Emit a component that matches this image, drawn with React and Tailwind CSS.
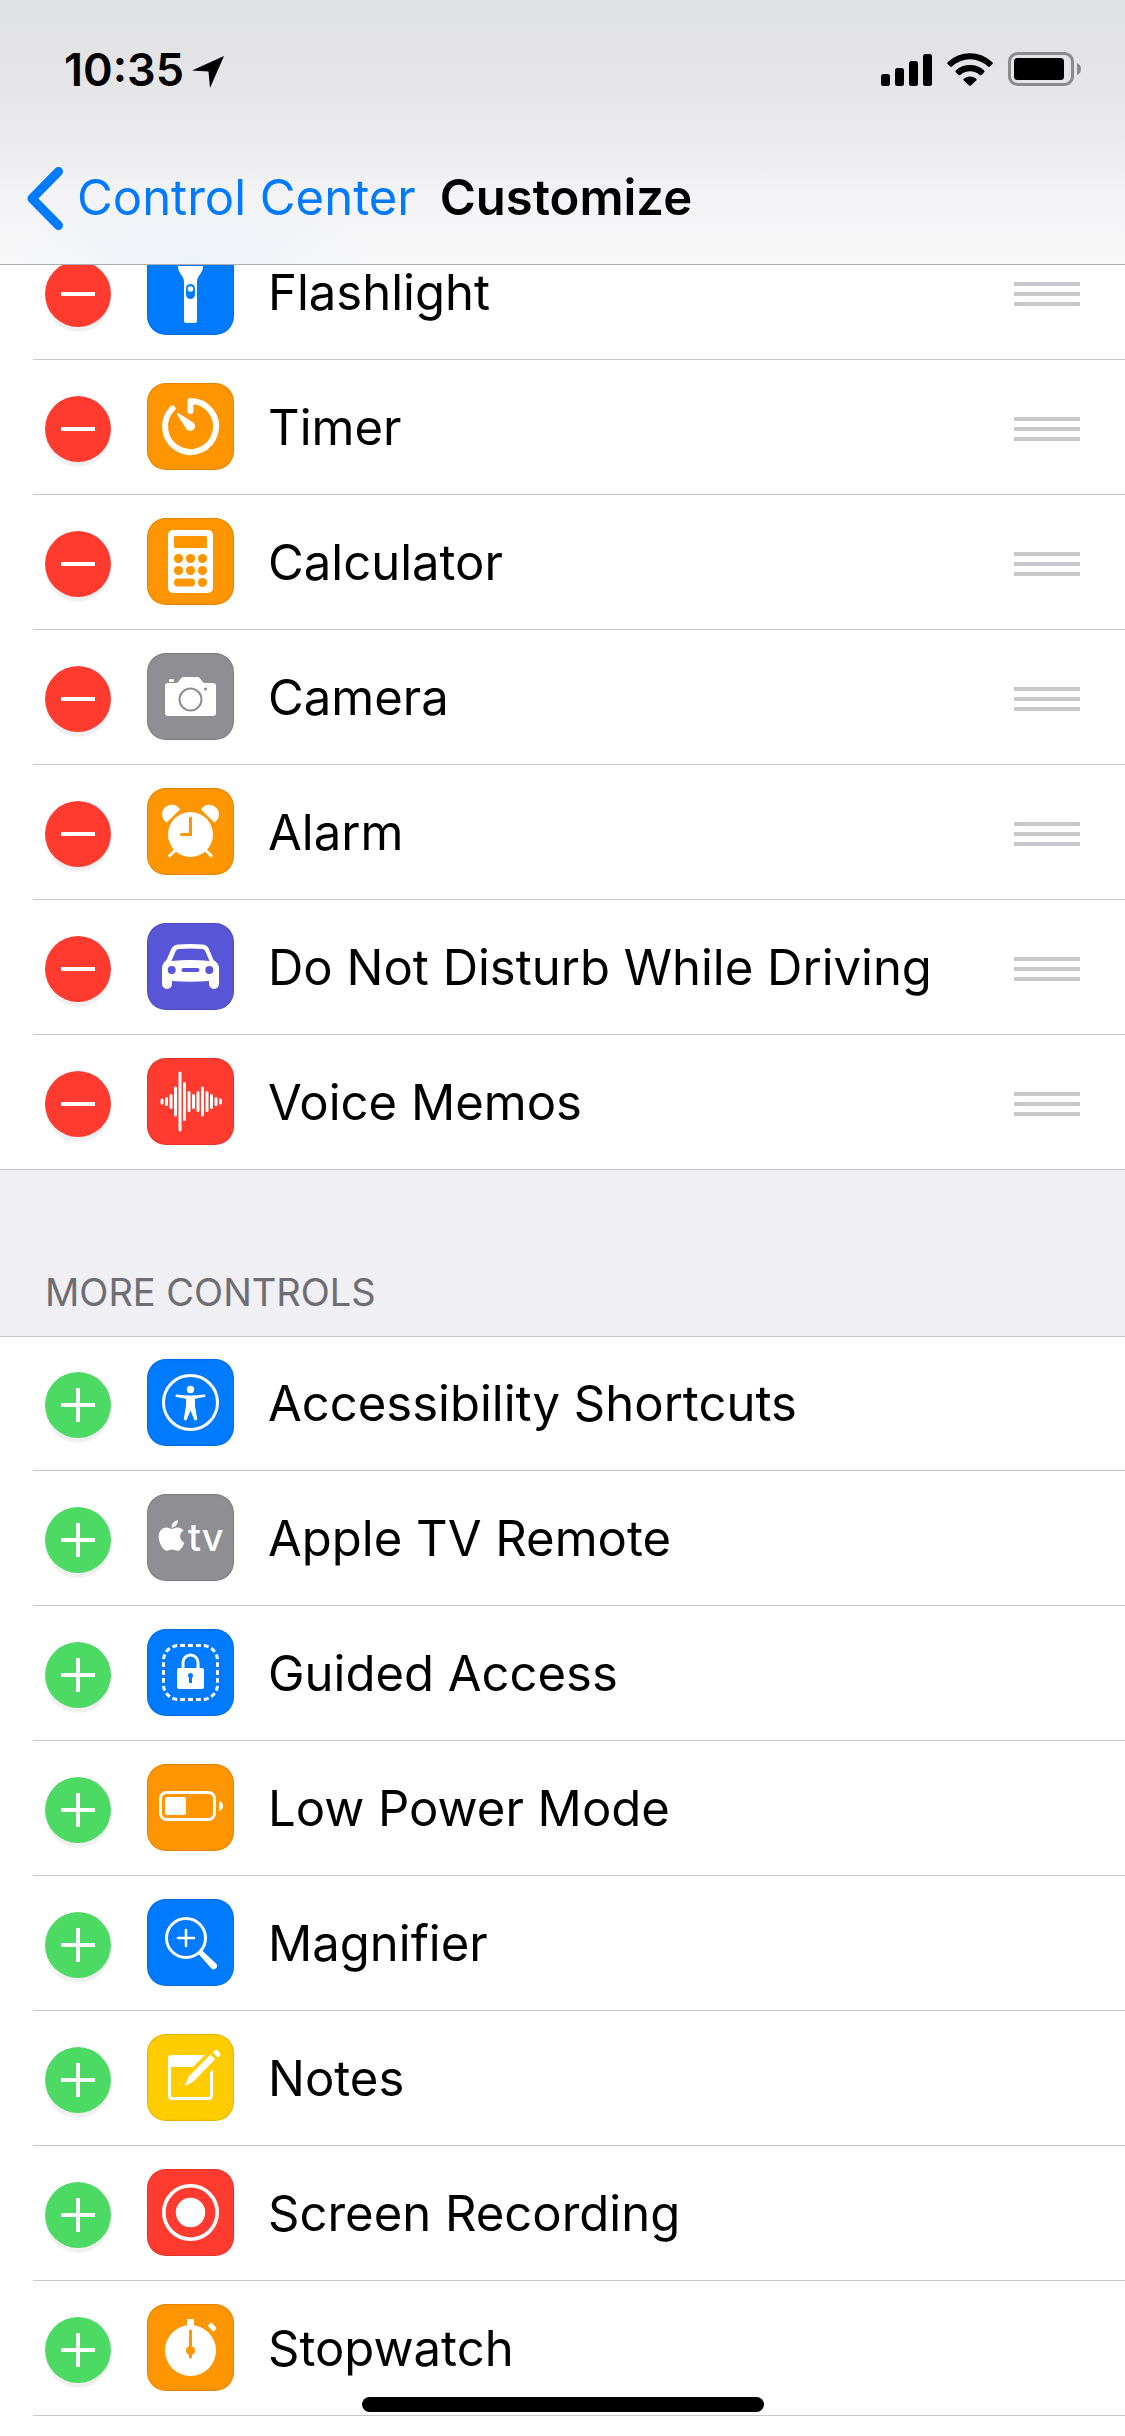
import { useState } from "react";
import { FaApple } from "react-icons/fa";

const Glyph = ({ children }) => (
    <svg viewBox="0 0 87 87" className="size-full" fill="none" stroke="none" aria-hidden="true">
        {children}
    </svg>
);

const FlashlightGlyph = () => (
    <Glyph>
        <path d="M31 12h25v3H31z" fill="white" />
        <path d="M31 18h25c0 8-6 9-6 16v39a2 2 0 0 1-2 2h-9a2 2 0 0 1-2-2V34c0-7-6-8-6-16z" fill="white" />
        <rect x="39" y="36" width="9" height="15" rx="4.5" fill="#007aff" />
        <circle cx="43.5" cy="41" r="2.8" fill="white" />
    </Glyph>
);

const TimerGlyph = () => (
    <Glyph>
        <path
            d="M43.5 28V18A25.5 25.5 0 1 1 25.5 25.5"
            stroke="white"
            strokeWidth="6"
            strokeLinecap="round"
            strokeLinejoin="round"
        />
        <path d="M30 30.5c.3-.6.7-.8 1.3-.4L46.6 39.8a4.8 4.8 0 1 1-6.8 6.8L30 31.5z" fill="white" />
    </Glyph>
);

const CalculatorGlyph = () => (
    <Glyph>
        <rect x="21" y="12" width="45" height="63" rx="5" fill="white" />
        <g fill="#ff9500">
            <rect x="27" y="18" width="33" height="12" rx="1.5" />
            {[40.5, 52.5].map((y) => [31.5, 43.5, 55.5].map((x) => <circle key={`${x}-${y}`} cx={x} cy={y} r="4.6" />))}
            <rect x="27" y="60.5" width="21" height="8" rx="4" />
            <circle cx="55.5" cy="64.5" r="4.6" />
        </g>
    </Glyph>
);

const CameraGlyph = () => (
    <Glyph>
        <path
            d="M21 30h8c4 0 3-6 8-6h13c5 0 4 6 8 6h8a3 3 0 0 1 3 3v27a3 3 0 0 1-3 3H21a3 3 0 0 1-3-3V33a3 3 0 0 1 3-3z"
            fill="white"
        />
        <rect x="22" y="26" width="5" height="3" rx="1" fill="white" />
        <circle cx="43.5" cy="46.5" r="11" stroke="#8e8e93" strokeWidth="2" />
        <circle cx="58.5" cy="36" r="1.6" fill="#8e8e93" />
    </Glyph>
);

const AlarmGlyph = () => (
    <Glyph>
        <circle cx="43.5" cy="46.5" r="22.5" fill="white" />
        <path d="M19.7 34.5A9.6 9.6 0 1 1 33 21.5z" fill="white" />
        <path d="M67.3 34.5A9.6 9.6 0 1 0 54 21.5z" fill="white" />
        <path d="M28 62.5l-5.3 5.3M59 62.5l5.3 5.3" stroke="white" strokeWidth="3" strokeLinecap="round" />
        <path d="M43.5 30v16.5h-9" stroke="#ff9500" strokeWidth="3" strokeLinecap="round" />
    </Glyph>
);

const CarGlyph = () => (
    <Glyph>
        <path
            fill="white"
            fillRule="evenodd"
            d="M31 21.5q12.5-1 25 0q4 .4 5.7 4l4.8 11.5q5.5 3.5 5.5 8V61a5 5 0 0 1-10 0v-3q-18.5 1.5-37 0v3a5 5 0 0 1-10 0V45q0-4.500 4.500-8l5-11.500q2-3.600 6.500-4zM31.5 26q-2 .3-3 2.5l-4 9.5q19-1.8 38 0l-4-9.5q-1-2.200-3-2.500q-12-.8-24 0z"
        />
        <g fill="#5856d6">
            <circle cx="24.7" cy="47" r="4" />
            <circle cx="62.3" cy="47" r="4" />
            <rect x="34.5" y="45" width="18" height="4" rx="2" />
        </g>
    </Glyph>
);

const waveform = [6, 9, 15, 30, 60, 39, 21, 15, 21, 30, 21, 15, 9, 6];

const VoiceGlyph = () => (
    <Glyph>
        {waveform.map((h, i) => (
            <rect key={i} x={13.5 + i * 4.5} y={43.5 - h / 2} width="3" height={h} rx="1.5" fill="white" />
        ))}
    </Glyph>
);

const AccessibilityGlyph = () => (
    <Glyph>
        <circle cx="43.5" cy="43.5" r="27" stroke="white" strokeWidth="3" />
        <circle cx="43.5" cy="30.5" r="3.7" fill="white" />
        <path
            fill="white"
            d="M30 35.5q13.5 2 27 0a1.3 1.3 0 0 1 .4 2.6l-9.4 1.6v7l2.2 13a1.6 1.6 0 0 1-3 .9L43.5 51.5 39.8 60.6a1.6 1.6 0 0 1-3-.9l2.2-13v-7l-9.4-1.6a1.3 1.3 0 0 1 .4-2.6z"
        />
    </Glyph>
);

const AppleTvGlyph = () => (
    <Glyph>
        <FaApple x="7" y="24" size={35} color="white" fill="white" />
        <text x="41" y="57" fill="white" className="text-[38px] font-medium">tv</text>
    </Glyph>
);

const GuidedGlyph = () => (
    <Glyph>
        <path
            d="M43.5 16.5h12a15 15 0 0 1 15 15v24a15 15 0 0 1-15 15h-24a15 15 0 0 1-15-15v-24a15 15 0 0 1 15-15z"
            pathLength="192"
            strokeDasharray="5 3"
            strokeDashoffset="2.5"
            stroke="white"
            strokeWidth="3"
        />
        <path d="M36 40v-6.5a7.5 7.5 0 0 1 15 0V40" stroke="white" strokeWidth="3" />
        <rect x="30" y="39" width="27" height="21" rx="2" fill="white" />
        <circle cx="43.5" cy="46.5" r="2.5" fill="#007aff" />
        <path d="M43.5 47v7" stroke="#007aff" strokeWidth="3" />
    </Glyph>
);

const LowPowerGlyph = () => (
    <Glyph>
        <rect x="13.5" y="28.5" width="54" height="27" rx="6" stroke="white" strokeWidth="3" />
        <rect x="18" y="33" width="21" height="18" rx="2" fill="white" />
        <path d="M72 37q4 1 4 5t-4 5z" fill="white" />
    </Glyph>
);

const MagnifierGlyph = () => (
    <Glyph>
        <circle cx="39" cy="39" r="19.5" stroke="white" strokeWidth="3" />
        <path d="M39 31v16M31 39h16" stroke="white" strokeWidth="2.6" strokeLinecap="round" />
        <path d="M51 54.5L54.5 51l14.8 13.7a3.5 3.5 0 0 1-4.9 4.9z" fill="white" />
    </Glyph>
);

const NotesGlyph = () => (
    <Glyph>
        <path d="M24.5 21H58L46 33H24v28.5q0 1.5 1.5 1.5h36q1.5 0 1.5-1.5V38.5l3-3V62q0 4-4 4H25q-4 0-4-4V24.5q0-3.5 3.5-3.5z" fill="white" />
        <path d="M37.7 52.2l4-9.7L63.5 20.5l4.7 4.7-21.7 22.3z" fill="white" />
        <path d="M65.7 18.3l2-1.900q1.600-1.200 3 .2l2.300 2.300q1.200 1.400 0 3l-2.100 1.900z" fill="white" />
    </Glyph>
);

const RecordGlyph = () => (
    <Glyph>
        <circle cx="43.5" cy="43.5" r="26.7" stroke="white" strokeWidth="3.6" />
        <circle cx="43.5" cy="43.5" r="14.7" fill="white" />
    </Glyph>
);

const StopwatchGlyph = () => (
    <Glyph>
        <circle cx="43.5" cy="46.5" r="25.5" fill="white" />
        <rect x="40" y="15" width="7" height="9" rx="1" fill="white" />
        <rect x="61" y="20.5" width="8.5" height="5" rx="1.5" fill="white" transform="rotate(45 65.2 23)" />
        <path d="M43.5 27v26" stroke="#ff9500" strokeWidth="3" strokeLinecap="round" />
        <circle cx="43.5" cy="46.5" r="4.5" fill="#ff9500" />
    </Glyph>
);

const initialIncluded = [
    { name: "Flashlight", tile: "bg-[#007aff]", Icon: FlashlightGlyph },
    { name: "Timer", tile: "bg-[#ff9500]", Icon: TimerGlyph },
    { name: "Calculator", tile: "bg-[#ff9500]", Icon: CalculatorGlyph },
    { name: "Camera", tile: "bg-[#8e8e93]", Icon: CameraGlyph },
    { name: "Alarm", tile: "bg-[#ff9500]", Icon: AlarmGlyph },
    { name: "Do Not Disturb While Driving", tile: "bg-[#5856d6]", Icon: CarGlyph },
    { name: "Voice Memos", tile: "bg-[#ff3b30]", Icon: VoiceGlyph },
];

const initialMore = [
    { name: "Accessibility Shortcuts", tile: "bg-[#007aff]", Icon: AccessibilityGlyph },
    { name: "Apple TV Remote", tile: "bg-[#8e8e93]", Icon: AppleTvGlyph },
    { name: "Guided Access", tile: "bg-[#007aff]", Icon: GuidedGlyph },
    { name: "Low Power Mode", tile: "bg-[#ff9500]", Icon: LowPowerGlyph },
    { name: "Magnifier", tile: "bg-[#007aff]", Icon: MagnifierGlyph },
    { name: "Notes", tile: "bg-[#ffcc00]", Icon: NotesGlyph },
    { name: "Screen Recording", tile: "bg-[#ff3b30]", Icon: RecordGlyph },
    { name: "Stopwatch", tile: "bg-[#ff9500]", Icon: StopwatchGlyph },
];

const StatusBar = () => (
    <div className="flex h-[132px] items-center justify-between pt-1.5 pr-11 pl-16">
        <div className="flex items-center gap-2">
            <span className="text-[45px] leading-none font-semibold">10:35</span>
            <svg viewBox="0 0 32 32" className="mt-1.5 size-8" aria-hidden="true">
                <path d="M32 0L18 32 16.5 15.5 0 14.5z" fill="black" />
            </svg>
        </div>
        <div className="flex items-center gap-[15px]">
            <svg viewBox="0 0 51 33" className="h-[33px] w-[51px]" aria-hidden="true">
                <rect x="0" y="21" width="9" height="12" rx="2.5" />
                <rect x="14" y="15" width="9" height="18" rx="2.5" />
                <rect x="28" y="8" width="9" height="25" rx="2.5" />
                <rect x="42" y="1" width="9" height="32" rx="2.5" />
            </svg>
            <svg viewBox="0 0 46 33" className="h-[33px] w-[46px]" aria-hidden="true">
                <path d="M.6 9.2a32.5 32.5 0 0 1 44.8 0q.9.9 0 1.8l-2.6 2.6q-.9.8-1.8 0a26 26 0 0 0-36 0q-.9.8-1.8 0L.6 11q-.9-.9 0-1.8z" />
                <path d="M8.8 17.5a20.8 20.8 0 0 1 28.4 0q.9.9 0 1.8l-2.7 2.6q-.9.8-1.8 0a14.4 14.4 0 0 0-19.4 0q-.9.8-1.8 0l-2.7-2.6q-.9-.9 0-1.8z" />
                <path d="M16.8 25.7a9.6 9.6 0 0 1 12.4 0q1 .9 0 1.8l-5.3 5.1q-.9.8-1.8 0l-5.3-5.1q-1-.9 0-1.8z" />
            </svg>
            <svg viewBox="0 0 73 34" className="h-[34px] w-[73px]" aria-hidden="true">
                <rect x="1.5" y="1.5" width="63" height="31" rx="8" fill="none" stroke="#8b8b8d" strokeWidth="3" />
                <rect x="6" y="6" width="50" height="22" rx="3.5" />
                <path d="M69 11q4 1.5 4 6t-4 6z" fill="#8b8b8d" />
            </svg>
        </div>
    </div>
);

const ControlRow = ({ item, added, last, onToggle }) => {
    const { name, tile, Icon } = item;

    return (
        <li className={`flex h-[135px] items-center border-b border-[#c8c7cc] pt-1 pr-[45px] ${last ? "pl-[45px]" : "ml-[33px] pl-3"}`}>
            <button
                onClick={() => onToggle(item)}
                aria-label={`${added ? "Remove" : "Add"} ${name}`}
                className={`flex size-[66px] shrink-0 items-center justify-center rounded-full shadow-[0_6px_1px_-1px_rgba(0,0,0,0.06)] ${added ? "bg-[#ff3b30]" : "bg-[#4cd964]"}`}
            >
                <svg viewBox="0 0 34 34" className="size-[34px]" stroke="white" strokeWidth="4" aria-hidden="true">
                    <path d={added ? "M0 17h34" : "M0 17h34M17 0v34"} />
                </svg>
            </button>
            <span className={`mb-[5px] ml-9 size-[87px] shrink-0 rounded-[19px] inset-shadow-[0_0_1px_1px_rgba(0,0,0,0.12)] ${tile}`}>
                <Icon />
            </span>
            <span className="mb-[3px] ml-[34px] flex-1 text-[49px] leading-[60px]">{name}</span>
            {added && (
                <button aria-label={`Reorder ${name}`} className="flex w-[66px] flex-col gap-1.5">
                    <span className="h-1 w-full bg-[#c7c7cc]" />
                    <span className="h-1 w-full bg-[#c7c7cc]" />
                    <span className="h-1 w-full bg-[#c7c7cc]" />
                </button>
            )}
        </li>
    );
};

export default function App() {
    const [included, setIncluded] = useState(initialIncluded);
    const [more, setMore] = useState(initialMore);

    const handleRemove = (item) => {
        setIncluded(included.filter((control) => control !== item));
        setMore([item, ...more]);
    };

    const handleAdd = (item) => {
        setMore(more.filter((control) => control !== item));
        setIncluded([...included, item]);
    };

    return (
        <div className="min-h-screen bg-white font-['Inter','Liberation_Sans',sans-serif] text-black">
            <header className="sticky top-0 z-10 border-b border-[#adadaf] bg-[radial-gradient(180px_80px_at_190px_100%,rgba(0,122,255,0.04),transparent),linear-gradient(#e1e2e4,#e3e3e6_20%,#ebebee_53%,#f4f4f6_76%,#f8f8f9)]">
                <StatusBar />
                <nav className="flex h-[132px] items-center gap-6 px-[27px]">
                    <a href="#control-center" className="flex items-center gap-3.5 text-[49px] leading-[60px] text-[#007aff]">
                        <svg viewBox="0 0 36 63" className="h-[63px] w-9" fill="none" aria-hidden="true">
                            <path d="M31.5 4.5L5 31.5l26.5 27" stroke="#007aff" strokeWidth="9" strokeLinecap="round" strokeLinejoin="round" />
                        </svg>
                        Control Center
                    </a>
                    <h1 className="text-[49px] leading-[60px] font-semibold">Customize</h1>
                </nav>
            </header>

            <main>
                {/* first row is scrolled partly under the header */}
                <ul className="-mt-10">
                    {included.map((item, index) => (
                        <ControlRow key={item.name} item={item} added last={index === included.length - 1} onToggle={handleRemove} />
                    ))}
                </ul>

                <div className="border-b border-[#c8c7cc] bg-[#efeff4] px-[45px] pt-[98px] pb-5">
                    <h2 className="text-[38px] leading-[48px] text-[#6d6d72]">MORE CONTROLS</h2>
                </div>
                <ul className="-mt-px">
                    {more.map((item) => (
                        <ControlRow key={item.name} item={item} onToggle={handleAdd} />
                    ))}
                </ul>
            </main>

            <div className="fixed bottom-6 left-1/2 z-20 h-[15px] w-[402px] -translate-x-1/2 rounded-full bg-black" />
        </div>
    );
}
